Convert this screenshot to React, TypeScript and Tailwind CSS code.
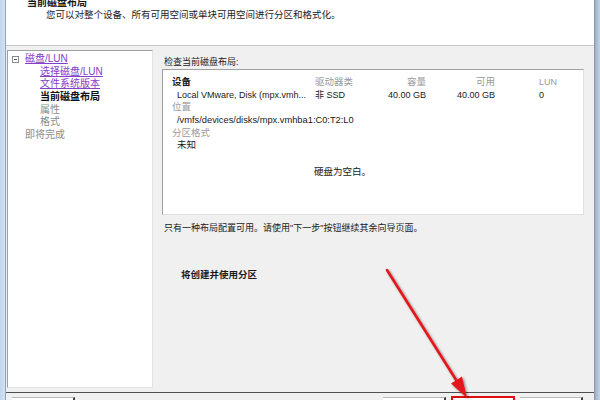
import React from "react";

const font = "font-['Liberation_Sans','Noto_Sans_CJK_SC',sans-serif]";

const TreeItem = ({ children, indent, tone }: { children: React.ReactNode; indent: string; tone: string }) => (
  <div className={`h-[12.67px] leading-[12.67px] whitespace-nowrap ${indent} ${tone}`}>{children}</div>
);

const Arrow = () => (
  <svg className="absolute left-0 top-0 pointer-events-none" width="600" height="400" viewBox="0 0 600 400">
    <defs>
      <filter id="sh" x="-20%" y="-20%" width="140%" height="140%">
        <feDropShadow dx="1.5" dy="1.5" stdDeviation="1.2" floodColor="#000" floodOpacity="0.45" />
      </filter>
    </defs>
    <g filter="url(#sh)">
      <line x1="387" y1="270" x2="458" y2="383" stroke="#e4181c" strokeWidth="2.6" strokeLinecap="round" />
      <polygon points="467,398 451,383.5 462,376.5" fill="#e4181c" />
    </g>
  </svg>
);

export default function App() {
  return (
    <div className={`relative w-[600px] h-[400px] overflow-hidden flex bg-[#f0f0f0] text-[#1a1a1a] ${font}`}>
      {/* left window frame */}
      <div className="w-[6px] h-full bg-gradient-to-r from-[#c2d5ec] to-[#d3e2f4] border-r border-[#8fa4bf]" />

      <div className="flex-1 flex flex-col">
        {/* header */}
        <div className="h-[46px] bg-white border-b border-[#c8c8c8] shrink-0">
          <div className="-mt-[3px] pl-[21px] text-[10px] leading-[12px] font-bold">当前磁盘布局</div>
          <div className="pl-[40px] text-[9.5px] leading-[12px]">您可以对整个设备、所有可用空间或单块可用空间进行分区和格式化。</div>
        </div>

        {/* body */}
        <div className="flex-1 flex pt-[4px] pl-[1px]">
          {/* tree */}
          <div className="w-[146px] h-[338px] bg-white border-t border-l border-[#a0a0a0] border-r-[#e3e3e3] border-b-[#e3e3e3] border-r border-b pt-[2px] text-[10px]">
            <div className="flex items-center h-[12.67px]">
              <span className="ml-[4px] w-[7px] h-[7px] border border-[#8a8a8a] flex items-center justify-center">
                <span className="w-[3px] h-px bg-[#555]" />
              </span>
              <span className="ml-[6px] text-[#8440c8] underline leading-[12.67px]">磁盘/LUN</span>
            </div>
            <TreeItem indent="pl-[32px]" tone="text-[#8440c8] underline">选择磁盘/LUN</TreeItem>
            <TreeItem indent="pl-[32px]" tone="text-[#8440c8] underline">文件系统版本</TreeItem>
            <TreeItem indent="pl-[32px]" tone="font-bold text-[#111]">当前磁盘布局</TreeItem>
            <TreeItem indent="pl-[32px]" tone="text-[#8a8a8a]">属性</TreeItem>
            <TreeItem indent="pl-[32px]" tone="text-[#8a8a8a]">格式</TreeItem>
            <TreeItem indent="pl-[17px]" tone="text-[#8a8a8a]">即将完成</TreeItem>
          </div>

          {/* content */}
          <div className="ml-[9px] flex flex-col">
            <div className="mt-[6px] pl-[2px] text-[9px] leading-[12px]">检查当前磁盘布局:</div>
            <div className="mt-[1px] w-[422px] h-[146px] bg-white border-t border-l border-[#a0a0a0] border-r border-b border-r-[#e0e0e0] border-b-[#e0e0e0] pt-[6px] pl-[9px] text-[9.5px] leading-[12.67px]">
              <div className="flex">
                <div className="w-[143px] font-bold">设备</div>
                <div className="w-[70px] text-[#9a9a9a]">驱动器类</div>
                <div className="w-[41px] text-right text-[#9a9a9a]">容量</div>
                <div className="w-[69px] text-right text-[#9a9a9a]">可用</div>
                <div className="w-[44px]" />
                <div className="text-[#9a9a9a] text-[9px]">LUN</div>
              </div>
              <div className="flex text-[9px]">
                <div className="w-[143px] pl-[5px] whitespace-nowrap">Local VMware, Disk (mpx.vmh...</div>
                <div className="w-[70px]">非 SSD</div>
                <div className="w-[41px] text-right whitespace-nowrap">40.00 GB</div>
                <div className="w-[69px] text-right">40.00 GB</div>
                <div className="w-[44px]" />
                <div>0</div>
              </div>
              <div className="text-[#9a9a9a]">位置</div>
              <div className="pl-[5px] text-[9.3px]">/vmfs/devices/disks/mpx.vmhba1:C0:T2:L0</div>
              <div className="text-[#9a9a9a]">分区格式</div>
              <div className="pl-[5px]">未知</div>
              <div className="mt-[14px] pl-[142px]">硬盘为空白。</div>
            </div>
            <div className="mt-[7px] pl-[2px] text-[9px] leading-[12px]">只有一种布局配置可用。请使用"下一步"按钮继续其余向导页面。</div>
            <div className="mt-[35px] pl-[19px] text-[9.5px] leading-[12px] font-bold">将创建并使用分区</div>
          </div>
        </div>

        {/* footer */}
        <div className="h-[8px] shrink-0 border-t border-[#505050] flex items-end pl-[6px] pr-[11px]">
          <div className="w-[63px] h-[3px] bg-white border-t border-[#b8b8b8] border-r-2 border-r-[#404040]" />
          <div className="flex-1" />
          <div className="w-[63px] h-[3px] bg-white border-t border-[#b8b8b8] border-r-2 border-r-[#404040]" />
          <div className="ml-[5px] w-[64px] h-[4px] border-2 border-b-0 border-[#e01010] bg-white" />
          <div className="ml-[5px] w-[63px] h-[3px] bg-white border-t border-[#b8b8b8] border-r-2 border-r-[#404040]" />
        </div>
      </div>

      {/* right window frame */}
      <div className="w-[6px] h-full bg-gradient-to-r from-[#9fb0c4] to-[#c5d3e3] border-l border-[#8a9aae]" />

      <Arrow />
    </div>
  );
}
